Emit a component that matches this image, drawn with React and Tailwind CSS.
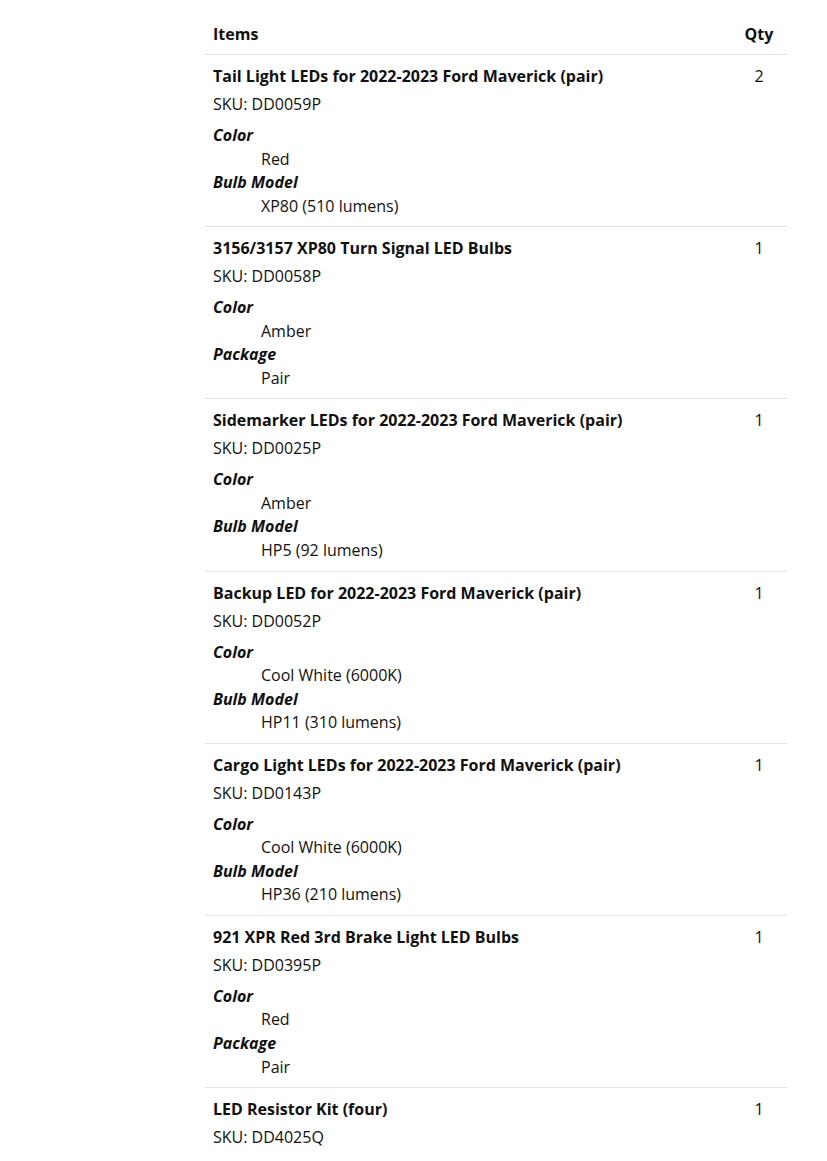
const items = [
  {
    name: "Tail Light LEDs for 2022-2023 Ford Maverick (pair)",
    sku: "DD0059P",
    qty: 2,
    options: [
      ["Color", "Red"],
      ["Bulb Model", "XP80 (510 lumens)"],
    ],
  },
  {
    name: "3156/3157 XP80 Turn Signal LED Bulbs",
    sku: "DD0058P",
    qty: 1,
    options: [
      ["Color", "Amber"],
      ["Package", "Pair"],
    ],
  },
  {
    name: "Sidemarker LEDs for 2022-2023 Ford Maverick (pair)",
    sku: "DD0025P",
    qty: 1,
    options: [
      ["Color", "Amber"],
      ["Bulb Model", "HP5 (92 lumens)"],
    ],
  },
  {
    name: "Backup LED for 2022-2023 Ford Maverick (pair)",
    sku: "DD0052P",
    qty: 1,
    options: [
      ["Color", "Cool White (6000K)"],
      ["Bulb Model", "HP11 (310 lumens)"],
    ],
  },
  {
    name: "Cargo Light LEDs for 2022-2023 Ford Maverick (pair)",
    sku: "DD0143P",
    qty: 1,
    options: [
      ["Color", "Cool White (6000K)"],
      ["Bulb Model", "HP36 (210 lumens)"],
    ],
  },
  {
    name: "921 XPR Red 3rd Brake Light LED Bulbs",
    sku: "DD0395P",
    qty: 1,
    options: [
      ["Color", "Red"],
      ["Package", "Pair"],
    ],
  },
  {
    name: "LED Resistor Kit (four)",
    sku: "DD4025Q",
    qty: 1,
    options: [],
  },
];

const ItemRow = ({ item }) => {
  return (
    <div className="flex border-b border-[#e2e2e2] last:border-b-0">
      <div className="flex-1 px-2 pt-2 pb-2">
        <div className="font-bold leading-[26px]">{item.name}</div>
        <div className="mt-[2px] leading-[26px]">SKU: {item.sku}</div>
        {item.options.length > 0 && (
          <dl className="mt-[7px] leading-[23.55px]">
            {item.options.map(([label, value]) => (
              <div key={label}>
                <dt className="font-bold italic">{label}</dt>
                <dd className="pl-12">{value}</dd>
              </div>
            ))}
          </dl>
        )}
      </div>
      <div className="w-14 pt-2 text-center leading-[26px]">{item.qty}</div>
    </div>
  );
};

const App = () => {
  return (
    <div className="min-h-[1161px] bg-white text-[16px] text-[#111] font-['Open_Sans',sans-serif]">
      <div className="ml-[205px] w-[582px]">
        <div className="flex border-b border-[#e2e2e2] pt-5 pb-[6px] font-bold leading-7">
          <div className="flex-1 px-2">Items</div>
          <div className="w-14 text-center">Qty</div>
        </div>
        {items.map((item) => (
          <ItemRow key={item.sku} item={item} />
        ))}
      </div>
    </div>
  );
};

export default App;
